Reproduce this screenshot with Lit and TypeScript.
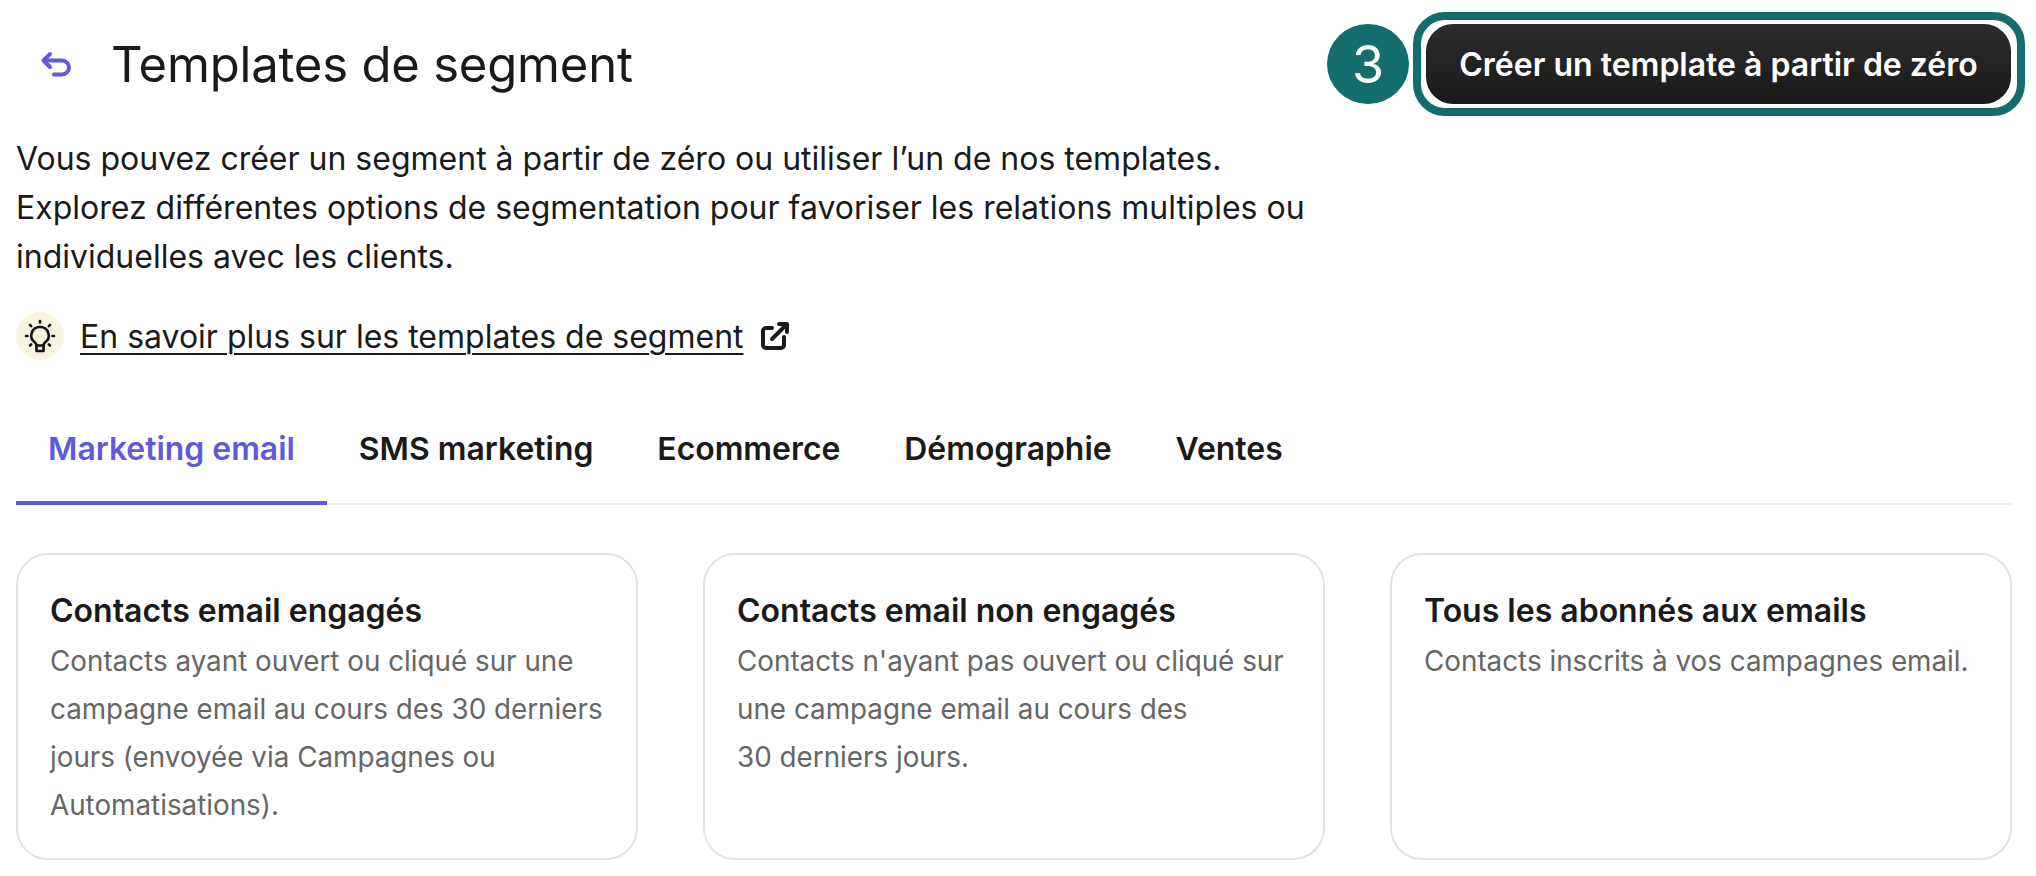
import { LitElement, html, css } from 'lit';
import { customElement } from 'lit/decorators.js';

const tabs = ['Marketing email', 'SMS marketing', 'Ecommerce', 'Démographie', 'Ventes'];

const cards = [
  {
    title: 'Contacts email engagés',
    lines: [
      'Contacts ayant ouvert ou cliqué sur une',
      'campagne email au cours des 30 derniers',
      'jours (envoyée via Campagnes ou',
      'Automatisations).',
    ],
  },
  {
    title: 'Contacts email non engagés',
    lines: [
      "Contacts n'ayant pas ouvert ou cliqué sur",
      'une campagne email au cours des',
      '30 derniers jours.',
    ],
  },
  {
    title: 'Tous les abonnés aux emails',
    lines: ['Contacts inscrits à vos campagnes email.'],
  },
];

@customElement('app-root')
export class AppRoot extends LitElement {
  static styles = css`
    :host {
      display: block;
      width: 2036px;
      height: 876px;
      box-sizing: border-box;
      padding: 24px 24px 0 16px;
      background: #fff;
      color: #1a1a1a;
      font-family: Inter, 'Liberation Sans', sans-serif;
      overflow: hidden;
    }

    .header {
      display: flex;
      align-items: center;
      height: 80px;
    }

    .back {
      display: flex;
      width: 32px;
      height: 28px;
      margin: 0 39px 0 24px;
      color: #6258de;
    }

    h1 {
      flex: 1;
      margin: 0;
      font-size: 49px;
      font-weight: 400;
      letter-spacing: -0.2px;
    }

    .badge {
      display: flex;
      align-items: center;
      justify-content: center;
      width: 82px;
      height: 80px;
      margin-right: 17px;
      border-radius: 50%;
      background: #126d6c;
      color: #fff;
      font-size: 52px;
    }

    .cta-wrap {
      position: relative;
      margin-right: 1px;
    }

    .cta {
      display: block;
      width: 585px;
      height: 80px;
      padding: 0;
      border: none;
      border-radius: 27px;
      background: linear-gradient(#2c2c2c, #1a1a1a);
      color: #fff;
      font: 600 32px Inter, 'Liberation Sans', sans-serif;
    }

    .cta-ring {
      position: absolute;
      inset: -12px -14px -12px -13px;
      border: 8px solid #126d6c;
      border-radius: 32px;
    }

    .intro {
      margin: 30px 0 0;
      font-size: 32px;
      line-height: 49px;
    }

    .learn {
      display: flex;
      align-items: center;
      margin-top: 31px;
      font-size: 32px;
    }

    .tip {
      display: flex;
      width: 48px;
      height: 48px;
      margin-right: 16px;
      border-radius: 50%;
      background: #f9f3e1;
    }

    .learn a {
      color: inherit;
      text-decoration: underline;
      text-decoration-thickness: 2px;
      text-underline-offset: 5px;
    }

    .ext {
      display: flex;
      margin-left: 16px;
    }

    .tabs {
      display: flex;
      margin-top: 36px;
      border-bottom: 2px solid #efefef;
    }

    .tab {
      height: 109px;
      padding: 0 32px;
      box-sizing: border-box;
      display: flex;
      align-items: center;
      margin-bottom: -2px;
      border-bottom: 4px solid transparent;
      font-size: 31.9px;
      font-weight: 600;
    }

    .tab.active {
      border-bottom-color: #6258de;
      color: #6258de;
    }

    .cards {
      display: grid;
      grid-template-columns: repeat(3, minmax(0, 1fr));
      gap: 65px;
      margin-top: 48px;
    }

    .card {
      box-sizing: border-box;
      height: 307px;
      padding: 33px 32px 0;
      border: 2px solid #e3e3e3;
      border-radius: 32px;
    }

    .card h2 {
      margin: 0 0 4px;
      font-size: 32px;
      font-weight: 600;
      line-height: 45px;
    }

    .card p {
      margin: 0;
      color: #666;
      font-size: 27.8px;
      line-height: 48px;
      white-space: nowrap;
    }
  `;

  render() {
    return html`
      <div class="header">
        <span class="back">
          <svg width="32" height="28" viewBox="0 0 32 28" fill="none" stroke="currentColor" stroke-width="4" stroke-linecap="round" stroke-linejoin="round">
            <path d="M10 4 3.500 10.500 10 17" />
            <path d="M4 10.500h18a7 7 0 0 1 0 14h-8" />
          </svg>
        </span>
        <h1>Templates de segment</h1>
        <span class="badge">3</span>
        <div class="cta-wrap">
          <button class="cta">Créer un template à partir de zéro</button>
          <span class="cta-ring"></span>
        </div>
      </div>

      <p class="intro">
        Vous pouvez créer un segment à partir de zéro ou utiliser l’un de nos templates.<br />
        Explorez différentes options de segmentation pour favoriser les relations multiples ou<br />
        individuelles avec les clients.
      </p>

      <div class="learn">
        <span class="tip">
          <svg width="48" height="48" viewBox="0 0 48 48" fill="none" stroke="#111" stroke-width="2.600" stroke-linecap="round" stroke-linejoin="round">
            <path d="M24 15a8.500 8.500 0 0 0-5 15.500c.8.700 1.500 1.500 1.500 3h7c0-1.500.7-2.300 1.500-3A8.500 8.500 0 0 0 24 15Z" />
            <path d="M20.500 33.500V39h7v-5.500" />
            <path d="M24 9v1.500M14 13l1.200 1.200M34 13l-1.200 1.200M10 24h1.500M36.500 24H38M14 33.500l1.200-1.200M34 33.500l-1.200-1.200" />
          </svg>
        </span>
        <a href="#">En savoir plus sur les templates de segment</a>
        <span class="ext">
          <svg width="30" height="30" viewBox="0 0 30 30" fill="none" stroke="#1a1a1a" stroke-width="4" stroke-linecap="round" stroke-linejoin="round">
            <path d="M12 7H6a3 3 0 0 0-3 3v14a3 3 0 0 0 3 3h15a3 3 0 0 0 3-3v-8" />
            <path d="M12 18 27 3M19 3h8v8" />
          </svg>
        </span>
      </div>

      <div class="tabs">
        ${tabs.map((t, i) => html`<div class="tab ${i === 0 ? 'active' : ''}">${t}</div>`)}
      </div>

      <div class="cards">
        ${cards.map(
          (c) => html`
            <div class="card">
              <h2>${c.title}</h2>
              ${c.lines.map((l) => html`<p>${l}</p>`)}
            </div>
          `
        )}
      </div>
    `;
  }
}
